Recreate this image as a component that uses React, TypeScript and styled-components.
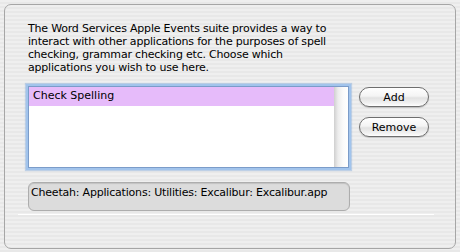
import styled, { createGlobalStyle } from 'styled-components';

const stripes = `repeating-linear-gradient(
    to bottom,
    #efefef 0px,
    #efefef 2px,
    #e8e8e8 2px,
    #e8e8e8 4px
)`;

const GlobalStyle = createGlobalStyle`
    html, body {
        margin: 0;
        padding: 0;
    }
    body {
        width: 460px;
        height: 252px;
        overflow: hidden;
        background: ${stripes};
        font-family: 'DejaVu Sans', 'Liberation Sans', sans-serif;
        font-size: 11px;
        color: #000;
    }
`;

const Panel = styled.div`
    box-sizing: border-box;
    margin: 4px 0 0 4px;
    width: 452px;
    height: 245px;
    border: 1px solid #a6a6a6;
    border-radius: 7px;
    background: ${stripes};
    padding: 17px 0 0 23px;
    display: flex;
    flex-direction: column;
`;

const Description = styled.p`
    margin: 0;
    font-size: 11px;
    line-height: 13px;
    letter-spacing: -0.2px;
`;

const Row = styled.div`
    display: flex;
    align-items: flex-start;
    margin-top: 12px;
`;

const ListBox = styled.div`
    box-sizing: border-box;
    width: 321px;
    height: 82px;
    background: #fff;
    border: 1px solid #7b9cc9;
    box-shadow: 0 0 0 2px #a2c4ec, 0 0 1px 3px rgba(130, 170, 220, 0.45);
    display: flex;
`;

const Items = styled.div`
    flex: 1;
`;

const Item = styled.div<{ selected?: boolean }>`
    height: 19px;
    line-height: 18px;
    padding-left: 4px;
    background: ${(p) => (p.selected ? '#e6bbfa' : 'transparent')};
`;

const Track = styled.div`
    width: 14px;
    background: linear-gradient(to right, #cfcfcf 0px, #ececec 4px, #fafafa 9px, #ffffff 14px);
`;

const Buttons = styled.div`
    display: flex;
    flex-direction: column;
    gap: 10px;
    margin-left: 10px;
    margin-top: 1px;
`;

const Button = styled.button`
    box-sizing: border-box;
    width: 70px;
    height: 20px;
    padding: 0;
    border: 1px solid #6e6e6e;
    border-radius: 10px;
    background: linear-gradient(to bottom, #ffffff 0%, #f4f4f4 45%, #e2e2e2 55%, #f2f2f2 85%, #ffffff 100%);
    box-shadow: 0 1px 1px rgba(0, 0, 0, 0.18);
    font-family: 'DejaVu Sans', 'Liberation Sans', sans-serif;
    font-size: 11px;
    color: #000;
    line-height: 17px;
    text-align: center;
`;

const PathField = styled.div`
    box-sizing: border-box;
    width: 322px;
    height: 29px;
    margin-top: 14px;
    padding: 3px 0 0 2px;
    border: 1px solid #adadad;
    border-radius: 6px;
    background: #dcdcdc;
    box-shadow: inset 0 1px 1px rgba(0, 0, 0, 0.12);
    font-size: 11px;
    line-height: 13px;
    letter-spacing: -0.2px;
    white-space: nowrap;
    overflow: hidden;
`;

const Separator = styled.div`
    width: 416px;
    margin: 3px 0 0 -10px;
    border-top: 1px solid #ffffff;
`;

export default function App() {
    return (
        <>
            <GlobalStyle />
            <Panel>
                <Description>
                    The Word Services Apple Events suite provides a way to<br />
                    interact with other applications for the purposes of spell<br />
                    checking, grammar checking etc. Choose which<br />
                    applications you wish to use here.
                </Description>
                <Row>
                    <ListBox>
                        <Items>
                            <Item selected>Check Spelling</Item>
                        </Items>
                        <Track />
                    </ListBox>
                    <Buttons>
                        <Button>Add</Button>
                        <Button>Remove</Button>
                    </Buttons>
                </Row>
                <PathField>Cheetah: Applications: Utilities: Excalibur: Excalibur.app</PathField>
                <Separator />
            </Panel>
        </>
    );
}
